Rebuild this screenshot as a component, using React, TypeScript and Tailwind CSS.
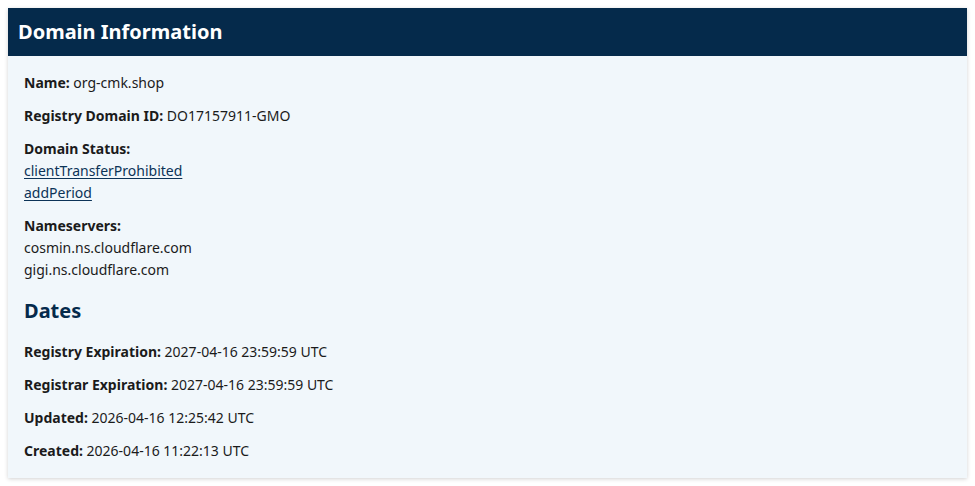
export default function App() {
  const rows = [
    ["Registry Expiration", "2027-04-16 23:59:59 UTC"],
    ["Registrar Expiration", "2027-04-16 23:59:59 UTC"],
    ["Updated", "2026-04-16 12:25:42 UTC"],
    ["Created", "2026-04-16 11:22:13 UTC"],
  ];

  return (
    <main className="min-h-screen bg-white p-2 font-['Noto_Sans',sans-serif] text-[14px] leading-[22px] text-[#1b1b1b]">
      <div className="bg-[#f1f7fb] shadow-[0_1px_4px_rgba(0,0,0,0.18)]">
        <div className="flex h-12 items-center bg-[#052a4b] px-[10px]">
          <h1 className="text-[20px] font-bold text-white">Domain Information</h1>
        </div>

        <div className="px-4 pt-4 pb-4">
          <p className="mb-[11px]">
            <b>Name:</b> org-cmk.shop
          </p>
          <p className="mb-[11px]">
            <b>Registry Domain ID:</b> DO17157911-GMO
          </p>
          <div className="mb-[11px]">
            <b className="block">Domain Status:</b>
            <a href="#" className="block w-fit text-[#0c3357] underline underline-offset-2">
              clientTransferProhibited
            </a>
            <a href="#" className="block w-fit text-[#0c3357] underline underline-offset-2">
              addPeriod
            </a>
          </div>
          <div>
            <b className="block">Nameservers:</b>
            <div>cosmin.ns.cloudflare.com</div>
            <div>gigi.ns.cloudflare.com</div>
          </div>

          <h2 className="mt-[15px] mb-[15px] text-[20px] leading-[30px] font-bold text-[#052a4b]">
            Dates
          </h2>

          <div className="flex flex-col gap-[11px]">
            {rows.map(([label, value]) => (
              <p key={label}>
                <b>{label}:</b> {value}
              </p>
            ))}
          </div>
        </div>
      </div>
    </main>
  );
}
